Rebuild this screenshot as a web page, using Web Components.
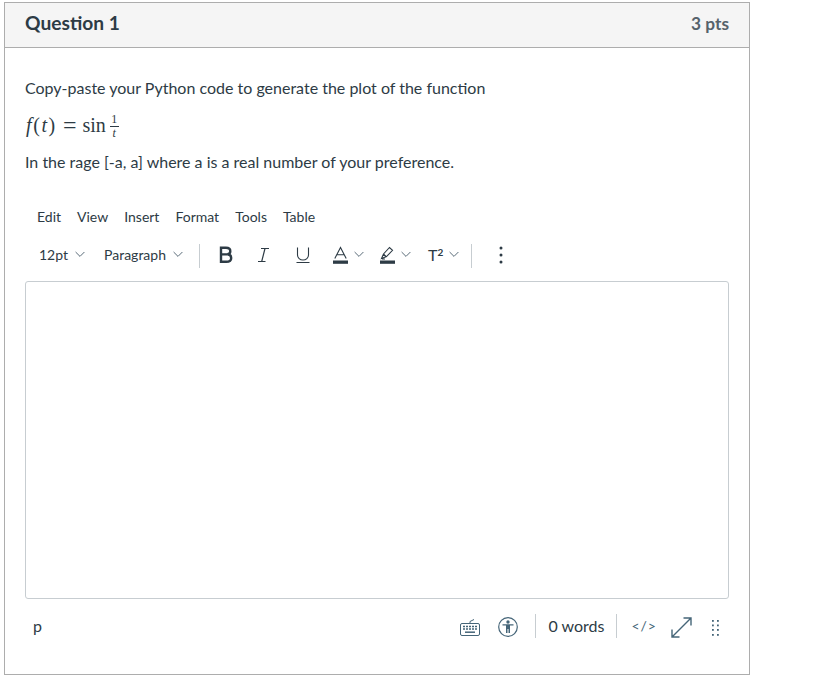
<!DOCTYPE html>
<html><head><meta charset="utf-8">
<style>
html,body{margin:0;padding:0;background:#fff}
body{font-family:Lato,"Open Sans",sans-serif;color:#2d3b45}
</style></head><body>
<quiz-page>
<quiz-card>
<span slot="title">Question 1</span>
<span slot="pts">3 pts</span>
<quiz-prompt></quiz-prompt>
<rce-editor></rce-editor>
</quiz-card>
</quiz-page>
<script>
function def(name,html){
  customElements.define(name,class extends HTMLElement{
    constructor(){super();this.attachShadow({mode:'open'}).innerHTML=html;}
  });
}
const S='stroke="#2d3b45" fill="none"';
const chev=`<svg class="chev" width="10" height="7" viewBox="0 0 10 7"><path d="M.6 1l4.400 4.400L9.400 1" stroke="#5a6b78" stroke-width="1" fill="none"/></svg>`;
def('quiz-page',`<style>:host{display:block;padding:2px 0 0 4px;width:746px;height:681px}</style><slot></slot>`);
def('quiz-card',`<style>
:host{display:flex;flex-direction:column;box-sizing:border-box;width:746px;height:673px;border:1px solid #adadad}
header{box-sizing:border-box;flex:none;display:flex;justify-content:space-between;align-items:center;background:#f5f5f5;border-bottom:1px solid #adadad;padding:0 20px 6px;height:45px}
.t{font-size:19.200px;font-weight:700;color:#2d3b45}
.p{font-size:17.300px;font-weight:700;color:#56626b;margin-top:2px}
main{flex:1;display:flex;flex-direction:column;min-height:0;padding:0 20px}
</style><header><span class="t"><slot name="title"></slot></span><span class="p"><slot name="pts"></slot></span></header><main><slot></slot></main>`);
def('quiz-prompt',`<style>
:host{display:block;font-size:16px;line-height:24px;color:#2d3b45;padding-top:28px}
p{margin:0 0 12px}
.m{display:flex;align-items:center;height:26px;margin:0 0 12px;font-family:"Liberation Serif",serif;font-size:20px;color:#2d3b45;white-space:pre;padding-left:1px}
i{font-style:italic}
.ft{letter-spacing:1.600px}
.frac{display:inline-flex;flex-direction:column;align-items:center;margin-left:4px;width:9px;margin-top:3px}
.frac span{display:block;text-align:center;width:100%}
.frac .n{font-size:12px;line-height:13px;border-bottom:1px solid #2d3b45}
.frac .d{font-size:12px;line-height:13px}
.eq{margin:0 6px 0 6px;font-size:24px;line-height:20px}
</style>
<p>Copy-paste your Python code to generate the plot of the function</p>
<div class="m"><span class="ft"><i>f</i>(<i>t</i>)</span><span class="eq">=</span>sin<span class="frac"><span class="n">1</span><span class="d"><i>t</i></span></span></div>
<p>In the rage [-a, a] where a is a real number of your preference.</p>`);
def('rce-menubar',`<style>
:host{display:flex;gap:16px;padding:0 0 0 12px;height:24px;align-items:center;font-size:14px;color:#2d3b45;margin-top:18px}
</style><span>Edit</span><span>View</span><span>Insert</span><span>Format</span><span>Tools</span><span>Table</span>`);
def('rce-toolbar',`<style>
:host{display:flex;align-items:center;height:38px;margin-top:7px;font-size:14px;color:#2d3b45;padding-left:14px}
span.l{display:inline-flex;align-items:center;gap:7px}
.sep{width:1px;height:24px;background:#c7cdd1;margin-top:4px !important}
svg{display:block;flex:none}
:host>svg,.ic>svg:first-child{margin-top:2px}
.ic{display:inline-flex;align-items:center;gap:6px}
</style>
<span class="l" style="margin-right:19px">12pt ${chev}</span>
<span class="l">Paragraph ${chev}</span>
<span class="sep" style="margin:0 17px 0 16px"></span>
<svg width="17" height="18" viewBox="0 0 17 18"><path d="M4 1.800h5c2.800 0 4.300 1.300 4.300 3.400 0 1.700-1 2.800-2.800 3.100 2.200.2 3.700 1.500 3.700 3.600 0 2.500-1.800 3.900-4.900 3.900H4zM4 8.400h6.300" stroke="#2d3b45" stroke-width="2.400" fill="none"/></svg>
<svg style="margin-left:22px" width="14" height="16" viewBox="0 0 14 16"><path d="M5 1.500h8M2 14.500h7.500M9 1.500L5.700 14.500" ${S} stroke-width="1.200"/></svg>
<svg style="margin-left:25px" width="16" height="18" viewBox="0 0 16 18"><path d="M2.500 1.500v7.500a5.500 5 0 0 0 11 0V1.500M1.500 16.500h13" ${S} stroke-width="1.100"/></svg>
<span class="ic" style="margin-left:22px"><svg width="15" height="18" viewBox="0 0 15 18"><path d="M1.800 12.500L7.500 1.500l5.700 11M3.700 8.800h7.600" ${S} stroke-width="1.100"/><rect y="14.500" width="15" height="3.300" fill="#2d3b45"/></svg>${chev}</span>
<span class="ic" style="margin-left:16px"><svg width="15" height="18" viewBox="0 0 15 18"><path d="M1.500 12.500l2-4.500 6-6.500 3 2.800-6 6.300zM3.500 8l3 3M2 13h3" ${S} stroke-width="1.100"/><rect y="14.500" width="15" height="3.300" fill="#2d3b45"/></svg>${chev}</span>
<span class="ic" style="margin-left:17px"><span style="font-size:16px;line-height:18px;display:inline-flex;align-items:flex-start;height:18px;margin-top:2px">T<span style="font-size:10px;line-height:12px;font-weight:700">2</span></span>${chev}</span>
<span class="sep" style="margin:0 26px 0 12px"></span>
<svg width="6" height="18" viewBox="0 0 6 18"><circle cx="3" cy="2" r="1.500" fill="#2d3b45"/><circle cx="3" cy="9" r="1.500" fill="#2d3b45"/><circle cx="3" cy="16" r="1.500" fill="#2d3b45"/></svg>`);
def('rce-statusbar',`<style>
:host{display:flex;align-items:center;height:52px;color:#2d3b45;font-size:16px;padding-left:8px;padding-right:10px}
.grow{flex:1}
.sep{width:1px;height:24px;background:#c7cdd1;margin-top:2px !important}
svg{display:block;flex:none;margin-top:4px}
</style>
<span style="color:#2d3b45;font-size:16px">p</span><span class="grow"></span>
<svg width="20" height="18" viewBox="0 0 20 18" style="margin-right:18px"><path d="M10 5.500V3.500l4-2" stroke="#456578" fill="none"/><rect x=".5" y="5.500" width="19" height="12" rx="1.500" stroke="#456578" fill="none"/><path d="M3 8.500h14M3 11h14" stroke="#456578" stroke-width="1.500" stroke-dasharray="2 1"/><path d="M5 14.200h10" stroke="#456578" stroke-width="1.500"/></svg>
<svg width="20" height="20" viewBox="0 0 20 20"><circle cx="10" cy="10" r="9.300" stroke="#456578" stroke-width="1.200" fill="none"/><circle cx="10" cy="5" r="1.700" fill="#456578"/><path d="M4.500 7.300h11v1.300h-3.500V16h-1.500v-4h-1v4H8V8.600H4.500z" fill="#456578"/></svg>
<span class="sep" style="margin:0 12px 0 17px"></span>
<span>0 words</span>
<span class="sep" style="margin:0 14px 0 12px"></span>
<span style="font-size:14px;letter-spacing:1px;color:#456578;white-space:nowrap">&lt;/&gt;</span>
<svg width="21" height="21" viewBox="0 0 21 21" style="margin-left:14px"><path d="M1 12.500V20h7.500M12.500 1H20v7.500M1 20L20 1" stroke="#456578" stroke-width="1.400" fill="none"/></svg>
<svg width="7" height="16" viewBox="0 0 7 16" style="margin-left:20px;margin-top:6px"><g fill="#456578"><rect x="0" y="0" width="1.800" height="1.800"/><rect x="5" y="0" width="1.800" height="1.800"/><rect x="0" y="4.500" width="1.800" height="1.800"/><rect x="5" y="4.500" width="1.800" height="1.800"/><rect x="0" y="9" width="1.800" height="1.800"/><rect x="5" y="9" width="1.800" height="1.800"/><rect x="0" y="14" width="1.800" height="1.800"/><rect x="5" y="14" width="1.800" height="1.800"/></g></svg>`);
def('rce-editor',`<style>
:host{display:flex;flex-direction:column;flex:1;min-height:0}
.area{box-sizing:border-box;height:318px;margin-top:8px;border:1px solid #c7cdd1;border-radius:3px;background:#fff}
</style><rce-menubar></rce-menubar><rce-toolbar></rce-toolbar><div class="area"></div><rce-statusbar></rce-statusbar>`);
</script>
</body></html>
